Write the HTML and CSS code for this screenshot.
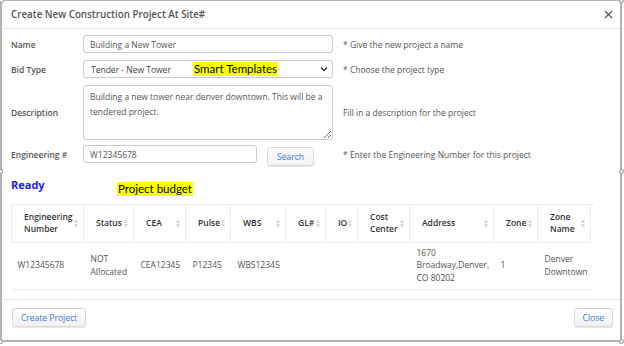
FILE: index.html
```html
<!DOCTYPE html>
<html lang="en">
<head>
    <meta charset="UTF-8">
    <title>Create New Construction Project</title>
    <link rel="stylesheet" href="styles.css">
</head>
<body>
    <div class="frame">
        <span class="handle h-tl"></span>
        <span class="handle h-tr"></span>
        <span class="handle h-ml"></span>
        <span class="handle h-mr"></span>
        <span class="handle h-bl"></span>
        <span class="handle h-br"></span>

        <div class="modal-header">
            <h4>Create New Construction Project At Site#</h4>
            <svg class="close-x" width="9" height="9" viewBox="0 0 9 9">
                <path d="M1 1 L8 8 M8 1 L1 8" stroke="#555" stroke-width="1.2" fill="none"/>
            </svg>
        </div>

        <div class="modal-body">
            <div class="form-row">
                <label>Name</label>
                <input class="ctl" type="text" value="Building a New Tower">
                <span class="hint">* Give the new project a name</span>
            </div>
            <div class="form-row">
                <label>Bid Type</label>
                <div class="select-wrap">
                    <div class="ctl select">Tender - New Tower</div>
                    <svg class="chevron" width="8" height="6" viewBox="0 0 8 6">
                        <path d="M1 1.5 L4 4.5 L7 1.5" stroke="#333" stroke-width="1.4" fill="none"/>
                    </svg>
                    <span class="note note-templates">Smart Templates</span>
                </div>
                <span class="hint">* Choose the project type</span>
            </div>
            <div class="form-row">
                <label>Description</label>
                <textarea class="ctl area">Building a new tower near denver downtown. This will be a tendered project.</textarea>
                <span class="hint">Fill in a description for the project</span>
            </div>
            <div class="form-row row-eng">
                <label>Engineering #</label>
                <div class="eng-group">
                    <input class="ctl eng" type="text" value="W12345678">
                    <button class="btn">Search</button>
                </div>
                <span class="hint">* Enter the Engineering Number for this project</span>
            </div>

            <div class="status-line">
                <span class="ready">Ready</span>
                <span class="note note-budget">Project budget</span>
            </div>

            <div class="table-wrap">
                <table class="grid">
                    <thead>
                        <tr>
                            <th class="c-eng">Engineering Number</th>
                            <th class="c-status">Status</th>
                            <th class="c-cea">CEA</th>
                            <th class="c-pulse">Pulse</th>
                            <th class="c-wbs">WBS</th>
                            <th class="c-gl">GL#</th>
                            <th class="c-io">IO</th>
                            <th class="c-cc">Cost Center</th>
                            <th class="c-addr">Address</th>
                            <th class="c-zone">Zone</th>
                            <th class="c-zname">Zone Name</th>
                        </tr>
                    </thead>
                    <tbody>
                        <tr>
                            <td>W12345678</td>
                            <td>NOT Allocated</td>
                            <td>CEA12345</td>
                            <td>P12345</td>
                            <td>WBS12345</td>
                            <td></td>
                            <td></td>
                            <td></td>
                            <td>1670 Broadway,Denver, CO 80202</td>
                            <td>1</td>
                            <td>Denver Downtown</td>
                        </tr>
                    </tbody>
                </table>
            </div>
        </div>

        <div class="modal-footer">
            <button class="btn">Create Project</button>
            <button class="btn">Close</button>
        </div>
    </div>
</body>
</html>
```

FILE: styles.css
```css
* {
    margin: 0;
    padding: 0;
    box-sizing: border-box;
}

body {
    font-family: "Open Sans", "Noto Sans", sans-serif;
    font-size: 8.5px;
    color: #555;
    background: #fff;
    width: 624px;
    height: 346px;
}

.frame {
    position: relative;
    width: 622px;
    height: 342px;
    border: 2px solid #b4b4b4;
    border-top-width: 1px;
    background: #fff;
    display: flex;
    flex-direction: column;
}

.handle {
    position: absolute;
    width: 5px;
    height: 5px;
    border: 1px solid #888;
    border-radius: 50%;
    background: #fff;
}

.h-tl { left: -3px; top: -3px; }
.h-tr { right: -4px; top: -3px; }
.h-ml { left: -4px; top: 168px; }
.h-mr { right: -4px; top: 168px; }
.h-bl { left: -4px; bottom: -4px; }
.h-br { right: -4px; bottom: -4px; }

.modal-header {
    height: 28px;
    display: flex;
    align-items: center;
    justify-content: space-between;
    padding: 0 7px 0 9px;
    border-bottom: 1px solid #e5e5e5;
}

.modal-header h4 {
    font-size: 9.8px;
    font-weight: 600;
    color: #555;
}

.modal-body {
    flex: 1;
    padding: 6px 0 0 9px;
}

.form-row {
    display: flex;
    align-items: center;
    margin-bottom: 7px;
}

.form-row label {
    width: 72px;
    font-weight: 600;
    color: #555;
}

.ctl {
    font-family: inherit;
    font-size: 8.5px;
    color: #555;
    width: 250px;
    height: 18px;
    border: 1px solid #ccc;
    border-radius: 3px;
    padding: 0 6px;
    background: #fff;
    outline: none;
}

.select-wrap {
    position: relative;
}

.select {
    display: flex;
    align-items: center;
    padding-left: 7px;
    color: #444;
}

.chevron {
    position: absolute;
    right: 5px;
    top: 6px;
}

.note {
    font-family: Lato, "Noto Sans", sans-serif;
    font-size: 11.5px;
    color: #000;
    background: #ffff00;
    line-height: 14px;
    padding: 0 1px;
}

.note-templates {
    position: absolute;
    left: 110px;
    top: 2px;
}

.area {
    height: 55px;
    padding: 3px 6px;
    line-height: 15px;
    resize: both;
}

.row-eng {
    margin-top: -2px;
}

.eng-group {
    width: 250px;
    height: 18px;
    display: flex;
    align-items: flex-start;
    gap: 10px;
}

.eng {
    width: 174px;
}

.hint {
    margin-left: 10px;
    color: #555;
}

.btn {
    font-family: inherit;
    font-size: 8.5px;
    color: #3a7bd5;
    height: 19px;
    padding: 0 8px;
    border: 1px solid #d9d9d9;
    border-radius: 3px;
    background: linear-gradient(#ffffff, #f1f1f1);
    box-shadow: 0 1px 1px rgba(0, 0, 0, 0.1);
}

.row-eng .btn {
    margin-top: 2px;
    padding: 0 9px;
}

.status-line {
    display: flex;
    align-items: flex-start;
    height: 34px;
    padding-top: 7px;
}

.ready {
    font-size: 11px;
    font-weight: 700;
    color: #1a1aff;
    width: 106px;
}

.note-budget {
    margin-top: 5px;
}

.table-wrap {
    width: 583px;
    border-top: 1px solid #ececec;
}

.grid {
    border-collapse: collapse;
    table-layout: fixed;
    width: 579px;
}

.grid th {
    position: relative;
    height: 37px;
    text-align: left;
    font-weight: 600;
    color: #333;
    line-height: 12px;
    padding: 0 10px 0 12px;
    border-left: 1px solid #ececec;
    border-right: 1px solid #ececec;
    border-bottom: 1px solid #ececec;
}

.grid th::before,
.grid th::after {
    content: "";
    position: absolute;
    right: 5px;
    width: 0;
    height: 0;
    border-left: 2.5px solid transparent;
    border-right: 2.5px solid transparent;
}

.grid th::before {
    top: 14px;
    border-bottom: 4px solid #d9d9d9;
}

.grid th::after {
    top: 19px;
    border-top: 4px solid #d9d9d9;
}

.grid td {
    height: 47px;
    padding: 0 4px 0 7px;
    line-height: 12.5px;
    vertical-align: middle;
    color: #555;
    border-bottom: 1px solid #ececec;
}

.grid td:first-child {
    padding-left: 6px;
}

.c-eng { width: 72px; }
.c-status { width: 50px; }
.c-cea { width: 52px; }
.c-pulse { width: 45px; }
.c-wbs { width: 55px; }
.c-gl { width: 40px; }
.c-io { width: 32px; }
.c-cc { width: 52px; }
.c-addr { width: 84px; }
.c-zone { width: 44px; }
.c-zname { width: 53px; }

.modal-footer {
    height: 41px;
    display: flex;
    align-items: flex-start;
    justify-content: space-between;
    padding: 8px 7px 0 10px;
    border-top: 1px solid #e5e5e5;
}
```
